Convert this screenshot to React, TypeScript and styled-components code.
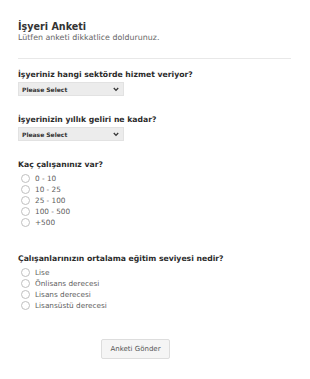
import styled, { createGlobalStyle } from "styled-components";

const GlobalStyle = createGlobalStyle`
  html, body {
    margin: 0;
    padding: 0;
    background: #ffffff;
  }
  body {
    font-family: "DejaVu Sans", Verdana, sans-serif;
  }
`;

const Page = styled.form`
  width: 310px;
  height: 379px;
  box-sizing: border-box;
  padding: 20px 19px 0 18px;
  display: flex;
  flex-direction: column;
`;

const Header = styled.header`
  padding-bottom: 15px;
  border-bottom: 1px solid #e8e8e8;
`;

const Title = styled.h1`
  margin: 0;
  font-size: 9.6px;
  font-weight: bold;
  color: #333333;
  line-height: 13px;
`;

const Subtitle = styled.p`
  margin: 0;
  font-size: 7.9px;
  color: #666666;
  line-height: 10px;
`;

const Question = styled.div<{ $gap: number }>`
  margin-top: ${(p) => p.$gap}px;
  display: flex;
  flex-direction: column;
`;

const Label = styled.div`
  font-size: 7.7px;
  font-weight: bold;
  color: #2b2b2b;
  line-height: 10px;
  margin-bottom: 2px;
`;

const SelectBox = styled.div`
  position: relative;
  width: 106px;
  height: 14px;
  box-sizing: border-box;
  background: #ececec;
  border: 1px solid #e2e2e2;
  display: flex;
  align-items: center;
  padding-left: 3px;
  font-size: 6px;
  font-weight: bold;
  color: #333333;
`;

const Chevron = styled.svg`
  position: absolute;
  right: 4px;
  top: 4px;
`;

const Options = styled.div`
  display: flex;
  flex-direction: column;
  padding-top: 1px;
`;

const Option = styled.div`
  display: flex;
  align-items: center;
  height: 11px;
  font-size: 7.3px;
  color: #606060;
`;

const Radio = styled.span`
  width: 7px;
  height: 7px;
  border-radius: 50%;
  border: 1px solid #c0c0c0;
  margin: 0 5px 0 3px;
  background: #fff;
`;

const Footer = styled.div`
  margin-top: 25px;
  padding-left: 83px;
`;

const Button = styled.button`
  width: 69px;
  height: 20px;
  background: #f5f5f5;
  border: 1px solid #dddddd;
  border-radius: 2px;
  font-family: "DejaVu Sans", Verdana, sans-serif;
  font-size: 7px;
  color: #555555;
  padding: 0;
`;

function Select() {
  return (
    <SelectBox>
      Please Select
      <Chevron width="6" height="5" viewBox="0 0 6 5">
        <path d="M0.8 1 L3 3.4 L5.2 1" fill="none" stroke="#333" strokeWidth="1.3" />
      </Chevron>
    </SelectBox>
  );
}

function Radios({ items }: { items: string[] }) {
  return (
    <Options>
      {items.map((item) => (
        <Option key={item}>
          <Radio />
          {item}
        </Option>
      ))}
    </Options>
  );
}

export default function App() {
  return (
    <>
      <GlobalStyle />
      <Page>
        <Header>
          <Title>İşyeri Anketi</Title>
          <Subtitle>Lütfen anketi dikkatlice doldurunuz.</Subtitle>
        </Header>
        <Question $gap={11}>
          <Label>İşyeriniz hangi sektörde hizmet veriyor?</Label>
          <Select />
        </Question>
        <Question $gap={19}>
          <Label>İşyerinizin yıllık geliri ne kadar?</Label>
          <Select />
        </Question>
        <Question $gap={19}>
          <Label>Kaç çalışanınız var?</Label>
          <Radios items={["0 - 10", "10 - 25", "25 - 100", "100 - 500", "+500"]} />
        </Question>
        <Question $gap={26}>
          <Label>Çalışanlarınızın ortalama eğitim seviyesi nedir?</Label>
          <Radios items={["Lise", "Önlisans derecesi", "Lisans derecesi", "Lisansüstü derecesi"]} />
        </Question>
        <Footer>
          <Button type="button">Anketi Gönder</Button>
        </Footer>
      </Page>
    </>
  );
}
